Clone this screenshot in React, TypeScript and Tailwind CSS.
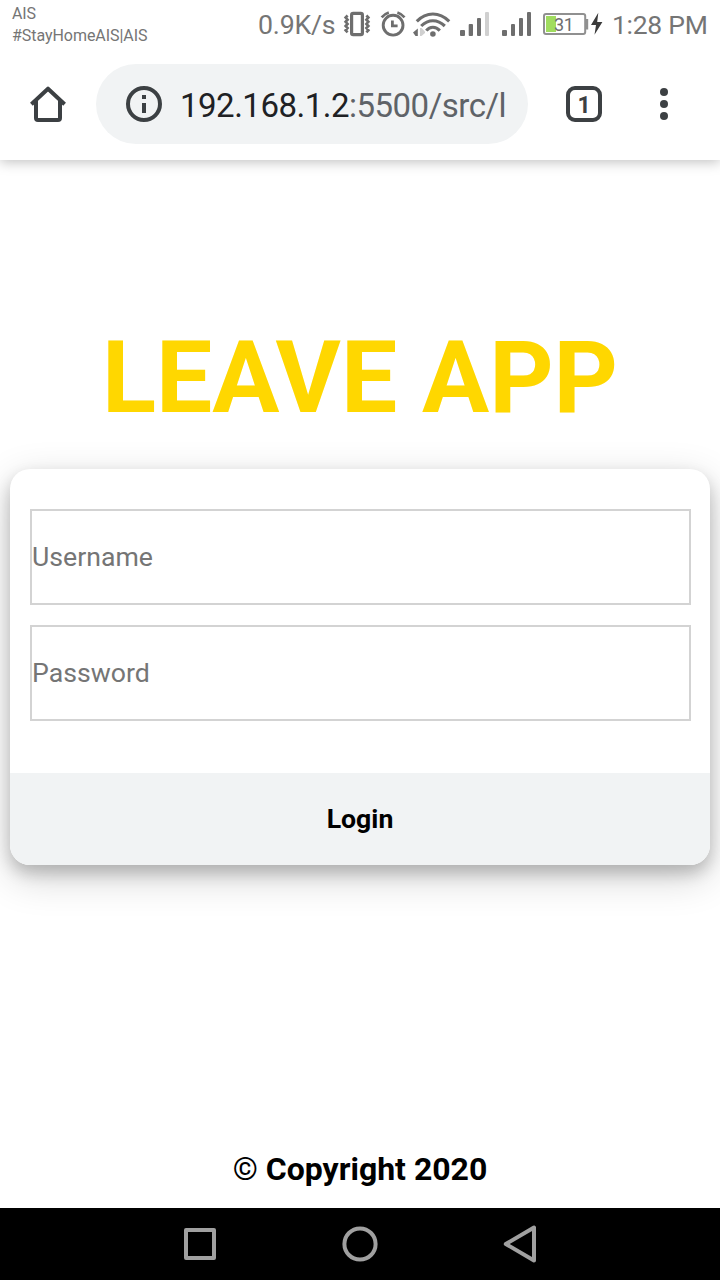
const ICON = '#6e6e6e';

function StatusBar() {
  return (
    <div className="relative z-10 flex h-12 shrink-0 bg-white text-[#757575]">
      <div className="w-[246px] pl-3 pt-[3px] text-[16px] leading-[22px]">
        <div className="tracking-[-0.2px]">AIS</div>
        <div className="tracking-[-0.05px]">#StayHomeAIS|AIS</div>
      </div>
      <div className="w-24 pl-3 pt-[9px] text-[26.7px] leading-8 tracking-[-0.2px] whitespace-nowrap">0.9K/s</div>
      <svg className="h-12 w-8" viewBox="342 0 32 48" fill="none" stroke={ICON}>
        <rect x="351.6" y="13.4" width="10.8" height="21.2" rx="1.6" strokeWidth="3.2" />
        <path d="M347.6 15.5l-2 2.1 2 2.1-2 2.1 2 2.1-2 2.1 2 2.1-2 2.1 2 2.1M366.4 15.5l2 2.1-2 2.1 2 2.1-2 2.1 2 2.1-2 2.1 2 2.1-2 2.1" strokeWidth="2.6" />
      </svg>
      <svg className="h-12 w-[38px]" viewBox="374 0 38 48" fill="none" stroke={ICON}>
        <circle cx="393.1" cy="25.2" r="9.9" strokeWidth="2.9" />
        <path d="M381.7 17.4Q384.4 13.8 388.8 12.4M404.5 17.4Q401.8 13.8 397.4 12.4" strokeWidth="2.6" />
        <path d="M392.4 20.6V25.8H397.6" strokeWidth="2.8" />
      </svg>
      <svg className="h-12 w-[42px]" viewBox="412 0 42 48" fill="none" stroke={ICON}>
        <path d="M420 28H421.5L425 31.5V33L421.5 36H420Z" fill="#d0d0d0" stroke="none" />
        <path d="M417.8 28.4V36H415.5L413 32.4Z" fill={ICON} stroke="none" />
        <path d="M416.8 21.3Q424 14 432.9 14T449.2 21.3M421.2 26Q426.5 20.8 432.9 20.8T444.8 26M426.3 30.6Q429 27.2 432.9 27.2T439.8 30.6" strokeWidth="3.1" />
        <circle cx="432.9" cy="34" r="2.8" fill={ICON} stroke="none" />
      </svg>
      <svg className="h-12 w-[42px]" viewBox="454 0 42 48" fill={ICON}>
        <rect x="460" y="30" width="5" height="6" rx="1" />
        <rect x="468.7" y="24" width="4.3" height="12" rx="1" />
        <rect x="477" y="18" width="4" height="18" rx="1" />
        <rect x="485" y="12" width="4" height="24" rx="1" fill="#d0d0d0" />
      </svg>
      <svg className="h-12 w-[42px]" viewBox="496 0 42 48" fill={ICON}>
        <rect x="502" y="30" width="5" height="6" rx="1" />
        <rect x="511" y="24" width="4" height="12" rx="1" />
        <rect x="519" y="18" width="4" height="18" rx="1" />
        <rect x="527" y="12" width="4" height="24" rx="1" />
      </svg>
      <svg className="h-12 w-[51px]" viewBox="538 0 51 48">
        <rect x="544" y="14" width="41.2" height="20" rx="2" fill="none" stroke="#909090" strokeWidth="2" />
        <rect x="586" y="19" width="2.2" height="10.5" fill="#909090" />
        <rect x="546" y="16" width="10" height="16" fill="#a0dc5f" />
        <text x="554" y="31.2" fontSize="18" letterSpacing="-0.4" fill="#6e6e6e">31</text>
      </svg>
      <svg className="h-12 w-4" viewBox="589 0 16 48">
        <path d="M598.3 12.7L591 25H596L594.5 34.8L602.4 21.9H597.2Z" fill="#3b3b3b" />
      </svg>
      <div className="pl-[7px] pt-[9px] text-[26.5px] leading-8 tracking-[-0.28px] whitespace-nowrap">1:28 PM</div>
    </div>
  );
}

function BrowserBar() {
  return (
    <div className="flex h-28 shrink-0 items-center bg-white shadow-[0_2px_12px_rgba(0,0,0,0.25)]">
      <svg className="h-12 w-24" viewBox="0 80 96 48" fill="none" stroke="#3c4043" strokeWidth="4" strokeLinejoin="round">
        <path d="M36 101V118Q36 120 38 120H58Q60 120 60 118V101" />
        <path d="M31.4 104.3L48 88.7L64.6 104.3" />
      </svg>
      <div className="flex h-20 w-[432px] items-center rounded-full bg-[#f1f3f4] pl-[28px]">
        <svg className="mr-4 h-10 w-10 shrink-0" viewBox="124 84 40 40" fill="none">
          <circle cx="144" cy="104" r="16" stroke="#3c4043" strokeWidth="4" />
          <path d="M142 95h4v4h-4zM142 103h4v10h-4z" fill="#3c4043" />
        </svg>
        <div className="pt-1 text-[33px] leading-10 tracking-[-0.5px] whitespace-nowrap text-[#5f6368]">
          <span className="text-[#202124]">192.168.1.2</span>:5500/src/l
        </div>
      </div>
      <div className="ml-[38px] flex size-9 items-center justify-center rounded-[9px] border-4 border-[#3c4043] pt-0.5 text-[23px] font-bold leading-none text-[#3c4043]">
        1
      </div>
      <svg className="ml-[50px] h-10 w-6" viewBox="652 84 24 40" fill="#3c4043">
        <circle cx="664" cy="92" r="4" />
        <circle cx="664" cy="104" r="4" />
        <circle cx="664" cy="116" r="4" />
      </svg>
    </div>
  );
}

function Field({ label, type }: { label: string; type: string }) {
  return (
    <input
      type={type}
      placeholder={label}
      aria-label={label}
      className="block h-24 w-full border-2 border-[#d3d3d3] bg-white text-[26.67px] outline-none placeholder:text-[#757575]"
    />
  );
}

function LoginCard() {
  return (
    <form className="mx-2.5 mt-[33px] overflow-hidden rounded-[20px] bg-white shadow-[0_8px_16px_rgba(0,0,0,0.2),0_12px_40px_rgba(0,0,0,0.19)]">
      <div className="flex h-[304px] flex-col gap-5 pt-10 pr-[19px] pl-5">
        <Field label="Username" type="text" />
        <Field label="Password" type="password" />
      </div>
      <button type="button" className="block h-[92px] w-full bg-[#f1f3f4] text-[26.67px] font-bold text-black">
        Login
      </button>
    </form>
  );
}

function NavigationBar() {
  return (
    <div className="flex h-[72px] shrink-0 items-center justify-center gap-[120px] bg-black">
      <svg className="size-10" viewBox="0 0 40 40" fill="none" stroke="#a0a0a0" strokeWidth="4" strokeLinejoin="round">
        <rect x="6" y="6" width="28" height="28" />
      </svg>
      <svg className="size-10" viewBox="0 0 40 40" fill="none" stroke="#a0a0a0" strokeWidth="4">
        <circle cx="20" cy="20" r="15.6" />
      </svg>
      <svg className="size-10" viewBox="0 0 40 40" fill="none" stroke="#a0a0a0" strokeWidth="4" strokeLinejoin="round">
        <path d="M34 3.5V36.5L5.8 20Z" />
      </svg>
    </div>
  );
}

export default function App() {
  return (
    <div className="flex h-[1280px] w-[720px] flex-col overflow-hidden bg-white font-['Roboto',sans-serif]">
      <StatusBar />
      <BrowserBar />
      <main className="flex flex-1 flex-col">
        <h1 className="mt-[159px] text-center text-[100px] leading-[117px] font-bold whitespace-nowrap text-[#ffd700]">LEAVE APP</h1>
        <LoginCard />
        <footer className="mt-auto pb-5 text-center text-[32px] leading-[38px] font-bold text-black">
          <span className="font-normal">©</span> Copyright 2020
        </footer>
      </main>
      <NavigationBar />
    </div>
  );
}
